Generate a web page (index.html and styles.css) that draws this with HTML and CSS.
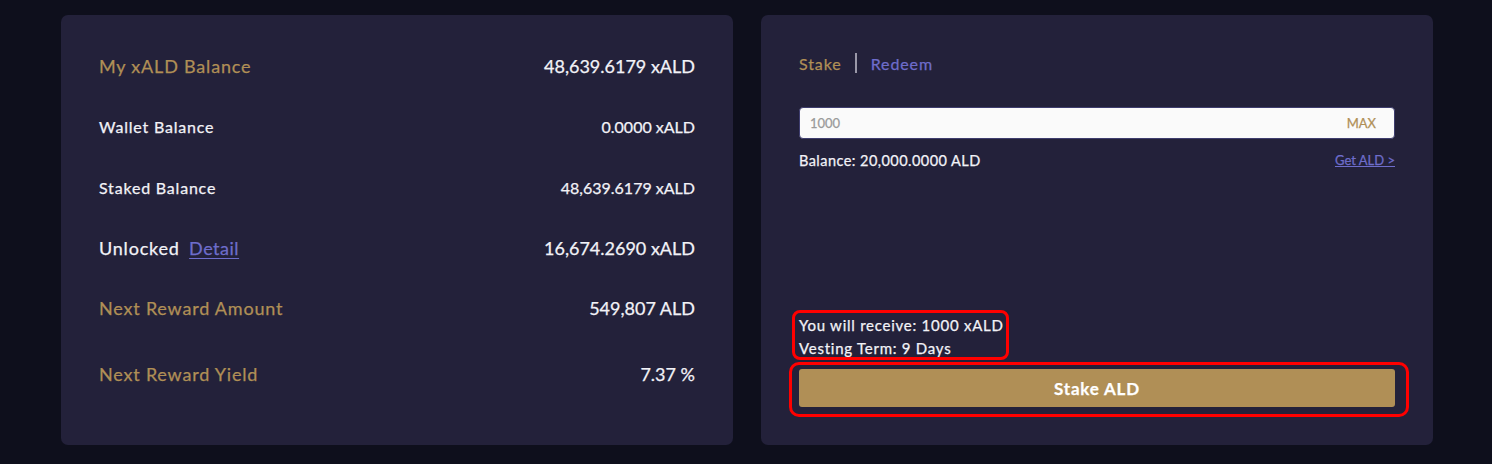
FILE: index.html
```html
<!DOCTYPE html>
<html>
<head>
<meta charset="utf-8">
<link rel="stylesheet" href="styles.css">
</head>
<body>
<div class="page">
  <section class="card balances">
    <div class="row big">
      <span class="label gold">My xALD Balance</span>
      <span class="val-big">48,639.6179 xALD</span>
    </div>
    <div class="row small">
      <span class="label">Wallet Balance</span>
      <span class="val-small">0.0000 xALD</span>
    </div>
    <div class="row small">
      <span class="label">Staked Balance</span>
      <span class="val-small">48,639.6179 xALD</span>
    </div>
    <div class="row big">
      <span class="label">Unlocked <a class="detail" href="#">Detail</a></span>
      <span class="val-big">16,674.2690 xALD</span>
    </div>
    <div class="row big">
      <span class="label gold">Next Reward Amount</span>
      <span class="val-big">549,807 ALD</span>
    </div>
    <div class="row big last">
      <span class="label gold">Next Reward Yield</span>
      <span class="val-big">7.37 %</span>
    </div>
  </section>

  <section class="card stake">
    <div class="tabs">
      <span class="tab active">Stake</span>
      <span class="divider"></span>
      <span class="tab">Redeem</span>
    </div>
    <div class="input">
      <span class="placeholder">1000</span>
      <span class="max">MAX</span>
    </div>
    <div class="balance-line">
      <span class="bal">Balance: 20,000.0000 ALD</span>
      <a class="get" href="#">Get ALD &gt;</a>
    </div>
    <div class="spacer"></div>
    <div class="info">
      <div>You will receive: 1000 xALD</div>
      <div>Vesting Term: 9 Days</div>
    </div>
    <button class="stake-btn">Stake ALD</button>
    <div class="mark mark-info"></div>
    <div class="mark mark-btn"></div>
  </section>
</div>
</body>
</html>
```

FILE: styles.css
```css
html, body {
  margin: 0;
  padding: 0;
  background: #0e0f1c;
}
body {
  font-family: Lato, "Open Sans", sans-serif;
  color: #f2f2f7;
  width: 1492px;
  height: 464px;
  overflow: hidden;
  -webkit-text-stroke: 0.25px currentColor;
}
.page {
  display: flex;
  gap: 28px;
  padding: 15px 0 0 61px;
}
.card {
  background: #23213a;
  border-radius: 7px;
  width: 672px;
  height: 430px;
  box-sizing: border-box;
}
.balances {
  padding: 31px 38px 0 38px;
  display: flex;
  flex-direction: column;
  gap: 20.5px;
}
.row {
  height: 40px;
  flex: none;
  display: flex;
  align-items: center;
  justify-content: space-between;
}
.row.last {
  margin-top: 5px;
}
.row.big {
  font-size: 18px;
}
.row.small {
  font-size: 16px;
}
.label {
  letter-spacing: 0.8px;
}
.gold {
  color: #b08f56;
}
.val-big {
  font-size: 18px;
}
.val-small {
  font-size: 16px;
}
.detail {
  color: #6e6dcb;
  margin-left: 4px;
  letter-spacing: 0.5px;
  text-decoration: underline;
  text-underline-offset: 3px;
}

.stake {
  position: relative;
  padding: 37px 38px 38px;
  display: flex;
  flex-direction: column;
}
.tabs {
  display: flex;
  align-items: center;
  height: 22px;
  font-size: 16px;
  letter-spacing: 0.9px;
}
.tab {
  color: #6e6dcb;
}
.tab.active {
  color: #b08f56;
}
.divider {
  width: 2px;
  height: 20px;
  background: #9a98a8;
  margin: 0 14px 0 13px;
}
.input {
  margin-top: 33px;
  height: 32px;
  box-sizing: border-box;
  background: #fafafa;
  border: 1px solid #3e3d6e;
  border-radius: 4px;
  display: flex;
  align-items: center;
  justify-content: space-between;
  padding: 0 18px 0 10px;
  font-size: 13px;
}
.placeholder {
  color: #9a9a9a;
}
.max {
  color: #b08f56;
}
.balance-line {
  margin-top: 12px;
  height: 18px;
  display: flex;
  align-items: center;
  justify-content: space-between;
  font-size: 14.5px;
}
.bal {
  letter-spacing: 0.45px;
}
.get {
  color: #6e6dcb;
  font-size: 13px;
  text-decoration: underline;
}
.spacer {
  flex: 1;
}
.info {
  font-size: 15px;
  line-height: 23px;
  letter-spacing: 0.75px;
}
.stake-btn {
  margin-top: 9px;
  height: 38px;
  border: none;
  border-radius: 3px;
  background: #b08f56;
  color: #ffffff;
  font-family: Lato, "Open Sans", sans-serif;
  font-weight: 700;
  font-size: 17px;
  letter-spacing: 0.8px;
  padding: 0;
}
.mark {
  position: absolute;
  border: 3px solid #ff0000;
  box-sizing: border-box;
}
.mark-info {
  left: 31px;
  top: 295px;
  width: 217px;
  height: 50px;
  border-radius: 8px;
}
.mark-btn {
  left: 28px;
  top: 347px;
  width: 620px;
  height: 55px;
  border-radius: 10px;
}
```
